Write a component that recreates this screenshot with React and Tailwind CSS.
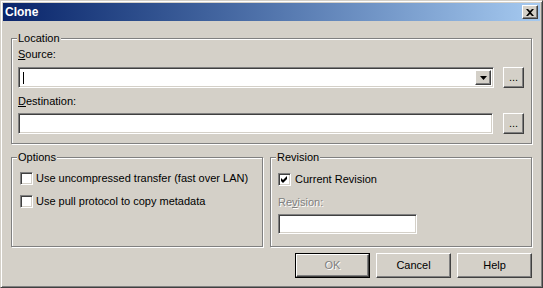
import React from "react";

const font = { fontFamily: '"Liberation Sans", Arial, sans-serif' };

const raised =
  "border border-t-white border-l-white border-r-[#404040] border-b-[#404040] shadow-[inset_-1px_-1px_0_#808080] bg-[#d4d0c8]";
const sunken =
  "border border-t-[#808080] border-l-[#808080] border-r-white border-b-white shadow-[inset_1px_1px_0_#404040,inset_-1px_-1px_0_#d4d0c8] bg-white";
const group =
  "border border-[#808080] shadow-[inset_1px_1px_0_#fff,1px_1px_0_#fff] m-0";

const Legend = ({ children, className }) => (
  <legend className={`px-[1px] leading-[13px] bg-[#d4d0c8] ${className}`}>{children}</legend>
);

const Checkbox = ({ checked }) => (
  <div className={`${sunken} w-[13px] h-[13px] shrink-0 flex items-center justify-center`}>
    {checked && (
      <svg width="7" height="7" viewBox="0 0 7 7">
        <polygon points="0,2 2,4 6,0 6,3 2,7 0,5" fill="#000" />
      </svg>
    )}
  </div>
);

const DotsButton = () => (
  <div className={`${raised} w-[21px] h-[21px] ml-[9px] shrink-0 flex items-center justify-center text-[11px] leading-none pb-[1px]`}>
    ...
  </div>
);

const Button = ({ children, disabled, isDefault }) => (
  <div className={`w-[75px] h-[25px] ${isDefault ? "border border-black" : ""}`}>
    <div className={`${raised} w-full h-full flex items-center justify-center ${disabled ? "text-[#808080] [text-shadow:1px_1px_0_#fff]" : ""}`}>
      {children}
    </div>
  </div>
);

export default function App() {
  return (
    <div
      style={font}
      className="w-[543px] h-[288px] bg-[#d4d0c8] text-[11px] text-black border border-t-[#d4d0c8] border-l-[#d4d0c8] border-r-[#404040] border-b-[#404040] shadow-[inset_1px_1px_0_#fff,inset_-1px_-1px_0_#808080] p-[2px] flex flex-col overflow-hidden"
    >
      {/* title bar */}
      <div className="h-[18px] bg-gradient-to-r from-[#0a246a] to-[#a6caf0] flex items-center justify-between pl-[2px] pr-[2px]">
        <span className="text-white font-bold text-[12px]">Clone</span>
        <div className={`${raised} w-[16px] h-[14px] flex items-center justify-center`}>
          <svg width="8" height="7" viewBox="0 0 8 7">
            <path d="M0 0h2l2 2 2-2h2L5 3.5 8 7H6L4 5 2 7H0l3-3.5z" fill="#000" />
          </svg>
        </div>
      </div>

      <div className="px-[8px] flex flex-col">
        {/* Location */}
        <fieldset className={`${group} mt-[11px] pl-[6px] pr-[7px] pt-[3px] pb-[9px]`}>
          <Legend className="-ml-[1px]">Location</Legend>
          <div className="leading-[13px]">
            <span className="underline">S</span>ource:
          </div>
          <div className="flex mt-[6px]">
            <div className={`${sunken} flex-1 h-[21px] flex items-stretch p-[2px]`}>
              <div className="flex-1 flex items-center pl-[2px]">
                <div className="w-[1px] h-[12px] bg-black" />
              </div>
              <div className={`${raised} w-[16px] flex items-center justify-center`}>
                <svg width="7" height="4" viewBox="0 0 7 4">
                  <path d="M0 0h7L3.5 4z" fill="#000" />
                </svg>
              </div>
            </div>
            <DotsButton />
          </div>
          <div className="leading-[13px] mt-[7px]">
            <span className="underline">D</span>estination:
          </div>
          <div className="flex mt-[5px]">
            <div className={`${sunken} flex-1 h-[21px] mr-[1px]`} />
            <DotsButton />
          </div>
        </fieldset>

        <div className="flex mt-[7px]">
          {/* Options */}
          <fieldset className={`${group} w-[252px] h-[96px] pl-[8px] pt-[8px]`}>
            <Legend className="-ml-[3px]">Options</Legend>
            <div className="flex items-center gap-[3px] h-[13px]">
              <Checkbox />
              <span>Use uncompressed transfer (fast over LAN)</span>
            </div>
            <div className="flex items-center gap-[3px] h-[13px] mt-[10px]">
              <Checkbox />
              <span>Use pull protocol to copy metadata</span>
            </div>
          </fieldset>

          {/* Revision */}
          <fieldset className={`${group} w-[262px] h-[96px] ml-[7px] pl-[7px] pt-[9px]`}>
            <Legend className="-ml-[2px]">Revision</Legend>
            <div className="flex items-center gap-[4px] h-[13px]">
              <Checkbox checked />
              <span>Current Revision</span>
            </div>
            <div className="leading-[13px] mt-[10px] text-[#808080] [text-shadow:1px_1px_0_#fff]">
              Re<span className="underline">v</span>ision:
            </div>
            <div className={`${sunken} w-[139px] h-[20px] mt-[5px]`} />
          </fieldset>
        </div>

        {/* buttons */}
        <div className="flex justify-end gap-[6px] mt-[6px]">
          <Button disabled isDefault>OK</Button>
          <Button>Cancel</Button>
          <Button>Help</Button>
        </div>
      </div>
    </div>
  );
}
